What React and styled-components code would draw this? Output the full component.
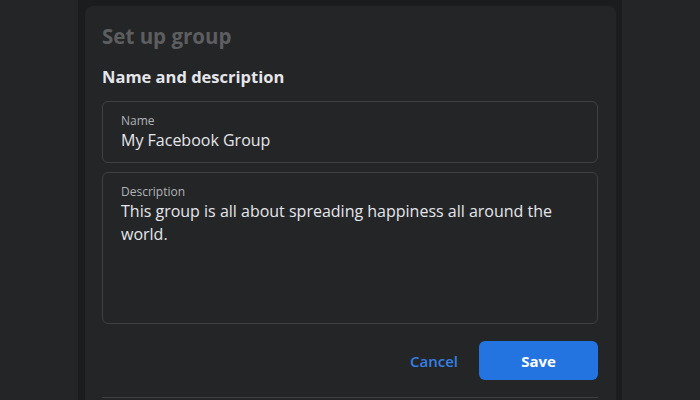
import React from "react";
import styled, { createGlobalStyle } from "styled-components";

const Global = createGlobalStyle`
  html, body { margin: 0; padding: 0; background: #242526; }
  body { font-family: "Open Sans", "Noto Sans", sans-serif; overflow: hidden; }
`;

const Page = styled.div`
  display: flex;
  justify-content: center;
  width: 700px;
  height: 400px;
  overflow: hidden;
`;

const Column = styled.div`
  width: 544px;
  background: #1b1c1d;
  padding: 6px 6px 0 7px;
  box-sizing: border-box;
`;

const Card = styled.div`
  background: #242526;
  border-radius: 8px 8px 0 0;
  padding: 18px 18px 0 17px;
  min-height: 420px;
  box-sizing: border-box;
`;

const Title = styled.h1`
  margin: 0;
  font-size: 20.5px;
  line-height: 24px;
  font-weight: 700;
  color: #5d5e60;
`;

const Section = styled.h2`
  margin: 18px 0 13px;
  font-size: 16.5px;
  line-height: 22px;
  font-weight: 700;
  color: #e4e6eb;
`;

const Fields = styled.div`
  display: flex;
  flex-direction: column;
  gap: 9px;
`;

const Field = styled.div`
  border: 1px solid #3e4042;
  border-radius: 6px;
  padding: 11px 18px 0;
  height: ${(p) => p.$h}px;
  box-sizing: border-box;
`;

const Label = styled.div`
  font-size: 12px;
  line-height: 16px;
  color: #b0b3b8;
`;

const Value = styled.div`
  font-size: 16px;
  line-height: 22.5px;
  color: #e4e6eb;
`;

const Actions = styled.div`
  display: flex;
  justify-content: flex-end;
  align-items: center;
  gap: 21px;
  margin-top: 17px;
  padding-bottom: 17px;
  border-bottom: 1px solid #3e4042;
`;

const LinkButton = styled.button`
  background: none;
  border: none;
  padding: 0;
  font-family: inherit;
  font-size: 15px;
  font-weight: 600;
  color: #3580e6;
  cursor: pointer;
`;

const PrimaryButton = styled.button`
  width: 119px;
  height: 39px;
  border: none;
  border-radius: 6px;
  background: #2374e1;
  color: #ffffff;
  font-family: inherit;
  font-size: 15px;
  font-weight: 700;
  cursor: pointer;
`;

export default function App() {
  return (
    <>
      <Global />
      <Page>
        <Column>
          <Card>
            <Title>Set up group</Title>
            <Section>Name and description</Section>
            <Fields>
              <Field $h={62}>
                <Label>Name</Label>
                <Value>My Facebook Group</Value>
              </Field>
              <Field $h={152}>
                <Label>Description</Label>
                <Value>This group is all about spreading happiness all around the world.</Value>
              </Field>
            </Fields>
            <Actions>
              <LinkButton>Cancel</LinkButton>
              <PrimaryButton>Save</PrimaryButton>
            </Actions>
          </Card>
        </Column>
      </Page>
    </>
  );
}
